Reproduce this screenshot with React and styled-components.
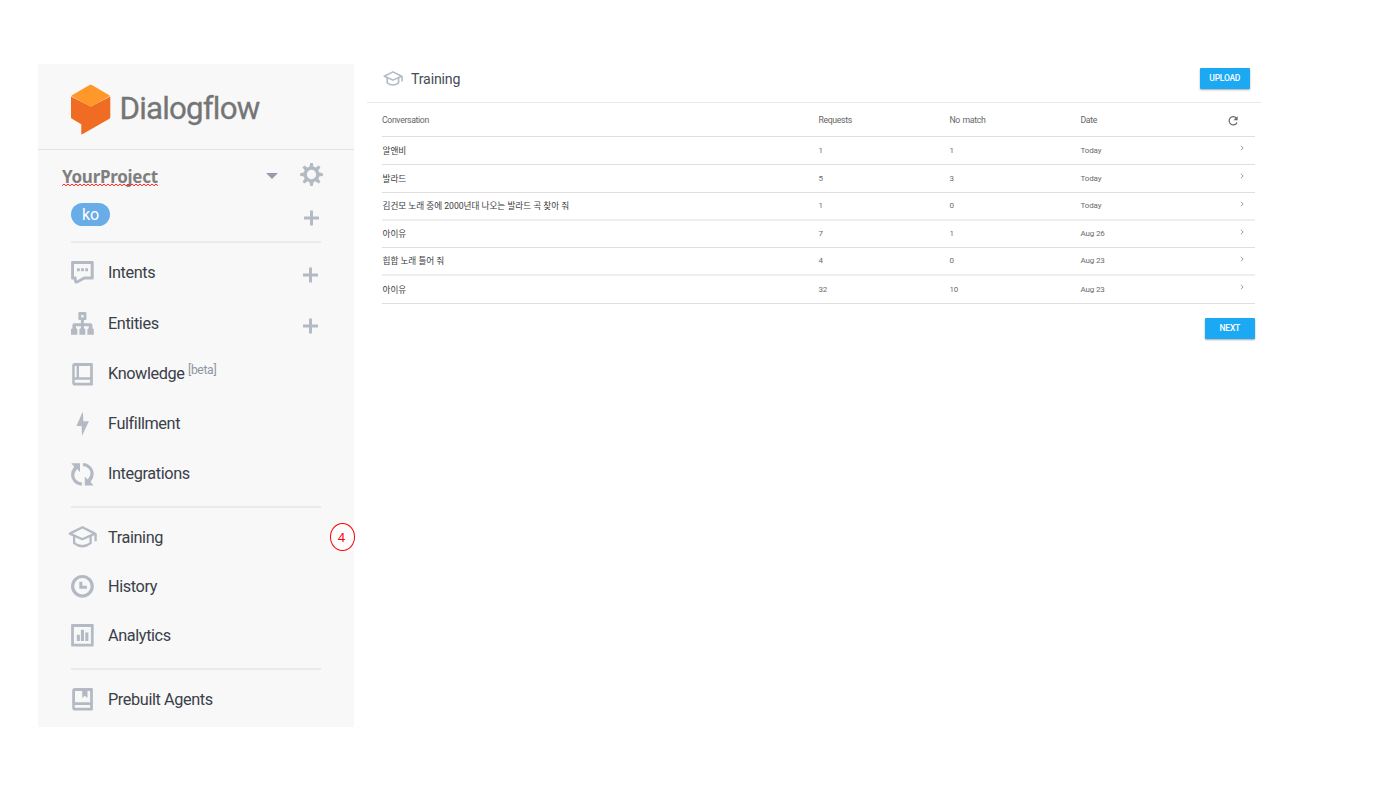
import React from "react";
import styled, { createGlobalStyle } from "styled-components";

const GlobalStyle = createGlobalStyle`
  * { box-sizing: border-box; }
  body { margin: 0; background: #fff; font-family: Roboto, "Noto Sans CJK KR", sans-serif; }
  svg { display: block; flex: none; }
`;

const ICON = "#b4bac4";

const Page = styled.div`
  display: flex;
  align-items: flex-start;
  gap: 13px;
  width: 1397px;
  height: 785px;
  padding: 64px 0 0 38px;
  overflow: hidden;
`;

/* ---------- sidebar ---------- */

const Sidebar = styled.aside`
  width: 316px;
  height: 663px;
  background: #f8f8f8;
`;

const Brand = styled.div`
  display: flex;
  align-items: flex-start;
  height: 86px;
  padding: 20px 0 0 32px;
  border-bottom: 1px solid #e2e2e2;
`;

const BrandName = styled.span`
  margin: 6px 0 0 7.5px;
  font-size: 31.3px;
  line-height: 38px;
  letter-spacing: -0.82px;
  color: #757575;
  -webkit-text-stroke: 0.3px #757575;
`;

const ProjectRow = styled.div`
  display: flex;
  align-items: center;
  height: 49px;
  padding: 0 31px 0 24px;
`;

const ProjectName = styled.span`
  position: relative;
  flex: 1;
  font: 700 17px/24px "Noto Sans", sans-serif;
  letter-spacing: -0.28px;
  color: #7f7f7f;
  padding-top: 4px;
`;

const Squiggle = styled.svg`
  position: absolute;
  left: 0;
  top: 22px;
`;

const Caret = styled.span`
  width: 0;
  height: 0;
  margin: 3px 22px 0 0;
  border: 6px solid transparent;
  border-top-color: #959cab;
  border-bottom: 0;
`;

const LanguageRow = styled.div`
  display: flex;
  justify-content: space-between;
  align-items: flex-start;
  height: 42px;
  padding: 4px 34.5px 0 33px;
`;

const LanguagePill = styled.span`
  width: 39px;
  height: 23px;
  border-radius: 12px;
  background: #68ade7;
  color: #fff;
  font-size: 16px;
  line-height: 23px;
  letter-spacing: -0.2px;
  text-align: center;
`;

const PlusSlot = styled.span`
  margin-top: ${(p) => p.$top || 0}px;
`;

const Divider = styled.hr`
  height: 2px;
  margin: 0 33px ${(p) => p.$below}px;
  border: 0;
  background: #ebebeb;
`;

const Group = styled.nav`
  padding-bottom: ${(p) => p.$below || 0}px;
`;

const NavItem = styled.a`
  display: flex;
  align-items: center;
  height: ${(p) => p.$height || 49}px;
  padding: 0 35.5px 0 30px;
  color: #3a4049;
  font-size: 16.3px;
  line-height: 20px;
`;

const IconSlot = styled.span`
  display: flex;
  justify-content: center;
  width: 28px;
  margin-right: 12px;
`;

const Label = styled.span`
  flex: 1;
  padding-top: ${(p) => p.$drop}px;
  letter-spacing: -0.4px;
`;

const Beta = styled.sup`
  position: relative;
  top: -5px;
  margin-left: 3.5px;
  vertical-align: baseline;
  font-size: 12.2px;
  letter-spacing: -0.35px;
  line-height: 1;
  color: #8f96a3;
`;

const StepMark = styled.span`
  display: flex;
  align-items: center;
  justify-content: center;
  width: 25px;
  height: 28px;
  margin-right: -36.5px;
  padding-right: 2px;
  border: 1px solid #f00;
  border-radius: 50%;
  background: #fff;
  color: #f00;
  font: 13px/1 "Noto Sans", sans-serif;
`;

/* ---------- training panel ---------- */

const Panel = styled.main`
  width: 894px;
`;

const PanelHeader = styled.header`
  display: flex;
  align-items: flex-start;
  height: 39px;
  padding: 4px 11px 0 16px;
  border-bottom: 1px solid #e8e8e8;
`;

const TitleIcon = styled.span`
  padding-top: 3px;
`;

const PanelTitle = styled.h1`
  flex: 1;
  margin: 1px 0 0 8px;
  font-size: 14.2px;
  letter-spacing: -0.18px;
  line-height: 20px;
  font-weight: 400;
  color: #464c57;
`;

const Button = styled.button`
  width: 50.5px;
  height: 20.5px;
  padding: 0;
  border: 0;
  border-radius: 1px;
  background: #1ba9f4;
  box-shadow: 0 1px 2px rgba(0, 0, 0, 0.35);
  color: #fff;
  font: 500 8.5px/20px Roboto, sans-serif;
  letter-spacing: -0.25px;
`;

const Table = styled.section`
  padding: 0 6px 0 15px;
`;

const Row = styled.div`
  display: grid;
  grid-template-columns: 436.5px 131px 131px 1fr auto;
  align-items: center;
  height: ${(p) => p.$height}px;
  border-bottom: ${(p) => (p.$soft ? "2px solid #eeeeee" : "1px solid #dfdfdf")};
  font-size: 8px;
  letter-spacing: -0.15px;
  line-height: 12px;
  color: #6b6b6b;
`;

const HeadRow = styled(Row)`
  font-size: 8.7px;
  letter-spacing: -0.35px;
  word-spacing: 0.8px;
  color: #666;
`;

const Phrase = styled.span`
  font-size: 8.65px;
  letter-spacing: -0.02px;
  padding-left: 0.5px;
  color: #3c3c3c;
`;

const RefreshSlot = styled.span`
  padding: 3px 16px 0 0;
`;

const ArrowSlot = styled.span`
  padding: 0 10px 5px 0;
`;

const Footer = styled.footer`
  display: flex;
  justify-content: flex-end;
  padding-top: 14px;
`;

/* ---------- icons ---------- */

const Logo = () => (
  <svg width="42" height="52" viewBox="0 0 42 52">
    <path d="M1 12.5 20.8 22.6 40.3 12.5V33.2Q40.3 34.2 39.4 34.8L12.3 50.3Q11.3 50.7 11.3 49.7V40.2L2 34.8Q1 34.2 1 33.2Z" fill="#ef6c22" />
    <path d="M19.5 1.1Q20.7.4 21.9 1.1L39.3 11.2Q40.4 11.9 39.3 12.5L20.7 22.7 2 12.5Q1 11.9 2 11.2Z" fill="#ff9829" />
  </svg>
);

const Plus = () => (
  <svg width="16" height="16" viewBox="0 0 16 16" fill="none" stroke={ICON} strokeWidth="3">
    <path d="M7.5 .5v15M0 8h15" />
  </svg>
);

const Gear = () => (
  <svg width="23" height="23" viewBox="-11.5 -11.5 23 23" fill="none" stroke={ICON}>
    <circle r="6.3" strokeWidth="3.3" />
    {[0, 45, 90, 135, 180, 225, 270, 315].map((a) => (
      <path key={a} transform={`rotate(${a})`} fill={ICON} stroke="none" d="M-2.2-7 -1.2-11.4H1.2L2.2-7Z" />
    ))}
  </svg>
);

const NavSvg = ({ children }) => (
  <svg width="24" height="24" viewBox="-0.4 -0.3 24 24" fill={ICON}>{children}</svg>
);

const Intents = () => (
  <NavSvg>
    <path fillRule="evenodd" d="M1.5.8h20.8q1 0 1 1v16.4q0 1-1 1h-8.2L6.8 23.2q-2.5.5-3-1.8l-.4-2.2H1.7q-1 0-1-1V1.8q0-1 .8-1ZM3.6 3.7v12.5h2.2l.8 3.9 6.9-3.9h6.8V3.7Z" />
    <path d="M6.6 8h2.8v2.9H6.6zM10.7 8h2.8v2.9h-2.8zM14.8 8h2.8v2.9h-2.8z" />
  </NavSvg>
);

const Entities = () => (
  <NavSvg>
    <path fillRule="evenodd" d="M9 .8h6q1 0 1 1v6q0 1-1 1h-1.5v3.1h6.8q1.7 0 1.7 1.7V17q1.4.2 1.4 1.5v4.9H17v-4.9q0-1.3 1.4-1.5v-2.1h-4.9V17q1.4.2 1.4 1.5v4.9H9v-4.9q0-1.3 1.5-1.5v-2.1H5.6V17Q7 17.2 7 18.5v4.9H.6v-4.9Q.6 17.2 2 17v-3.4q0-1.7 1.7-1.7h6.8V8.8H9q-1 0-1-1v-6q0-1 1-1Zm1.9 3v2.3h2.2V3.8Z" />
  </NavSvg>
);

const Knowledge = () => (
  <NavSvg>
    <path fillRule="evenodd" d="M4.5.8h17q1 0 1 1v20.4q0 1-1 1h-17q-2.7 0-2.7-2.8V3.5Q1.8.8 4.5.8ZM8.6 3.6V15h11.1V3.6ZM4.3 3.8V15h1.9V3.6H4.9ZM5 17.5q-.7 0-.7 1v1q0 1 .7 1h14.7v-3Z" />
  </NavSvg>
);

const Prebuilt = () => (
  <NavSvg>
    <path fillRule="evenodd" d="M4.5.8h17q1 0 1 1v20.4q0 1-1 1h-17q-2.7 0-2.7-2.8V3.5Q1.8.8 4.5.8ZM4.6 3.6V15h15.1V3.6h-2.6v7.1l-2.7-2.2-2.6 2.2V3.6ZM5 17.7q-.7 0-.7.9v.9q0 .9.7.9h14.7v-2.7Z" />
  </NavSvg>
);

const Fulfillment = () => (
  <NavSvg><path d="M11.8.5 6 13.8h5.2L11.6 23.6 18.5 9h-5.6L12.6.5Z" /></NavSvg>
);

const Integrations = () => (
  <NavSvg>
    <path d="M.9.9h8.7v9L6.7 6.8Q1.5 12.8 5.9 17.7 8.2 20 11.5 20.2V23.4Q4.4 23 1.5 16.5-.9 10 3.8 4.4ZM23.1 23.1h-8.7v-9l2.9 3.1q5.2-6 .8-10.9Q15.8 4 12.5 3.8V.6q7.1.4 10 6.9 2.4 6.5-2.3 12.1Z" />
  </NavSvg>
);

const History = () => (
  <NavSvg>
    <circle cx="12" cy="12" r="9.8" fill="none" stroke={ICON} strokeWidth="3.2" />
    <path d="M8.9 7.5h3v4h4.6v3H8.9Z" />
  </NavSvg>
);

const Analytics = () => (
  <NavSvg>
    <path fillRule="evenodd" d="M1.5.8h21q.8 0 .8.8v20.8q0 .8-.8.8h-21q-.8 0-.8-.8V1.6q0-.8.8-.8ZM3.5 3.6v16.8h17V3.6Z" />
    <path d="M6.4 11.5h3.1v6.2H6.4zM10.5 6.4h3.1v11.3h-3.1zM14.9 9.2H18v8.5h-3.1z" />
  </NavSvg>
);

const Cap = ({ width = 29 }) => (
  <svg width={width} height={(width * 22) / 29} viewBox="0 0 29 22" fill="none" stroke={ICON} strokeWidth="2.3" strokeLinejoin="round">
    <path d="M1.8 7.6 14.4 1.3 27 7.6 14.4 13.2Z" />
    <path d="M6.1 10v7.1q8.2 6.3 16.5 0V10M27.6 7.4v7.9" />
  </svg>
);

const Refresh = () => (
  <svg width="12" height="12" viewBox="0 0 12 12" fill="none" stroke="#666" strokeWidth="1.2">
    <path d="M9.3 3A4.1 4.1 0 1 0 10 7.4" />
    <path d="M10.6 1.3v4H6.5Z" fill="#666" stroke="none" />
  </svg>
);

const Arrow = () => (
  <svg width="6" height="6" viewBox="0 0 6 6" fill="none" stroke="#999" strokeWidth="1">
    <path d="M2 .8 4.1 3 2 5.2" />
  </svg>
);

/* ---------- data ---------- */

const primary = [
  { label: "Intents", Icon: Intents, height: 50.5, drop: 2, add: true },
  { label: "Entities", Icon: Entities, height: 51, drop: 2, add: true },
  { label: "Knowledge", Icon: Knowledge, height: 50.5, beta: true },
  { label: "Fulfillment", Icon: Fulfillment, height: 49.5 },
  { label: "Integrations", Icon: Integrations, height: 50 },
];

const secondary = [
  { label: "Training", Icon: Cap, drop: 2, step: 4 },
  { label: "History", Icon: History, drop: 2 },
  { label: "Analytics", Icon: Analytics, drop: 2 },
];

const conversations = [
  { phrase: "알앤비", requests: 1, noMatch: 1, date: "Today", height: 28 },
  { phrase: "발라드", requests: 5, noMatch: 3, date: "Today", height: 28 },
  { phrase: "김건모 노래 중에 2000년대 나오는 발라드 곡 찾아 줘", requests: 1, noMatch: 0, date: "Today", height: 28, soft: true },
  { phrase: "아이유", requests: 7, noMatch: 1, date: "Aug 26", height: 27 },
  { phrase: "힙합 노래 틀어 줘", requests: 4, noMatch: 0, date: "Aug 23", height: 28, soft: true },
  { phrase: "아이유", requests: 32, noMatch: 10, date: "Aug 23", height: 28 },
];

const Item = ({ label, Icon, height, drop = 0, add, beta, step }) => (
  <NavItem $height={height}>
    <IconSlot><Icon /></IconSlot>
    <Label $drop={drop}>
      {label}
      {beta && <Beta>[beta]</Beta>}
    </Label>
    {add && <PlusSlot $top={6}><Plus /></PlusSlot>}
    {step && <StepMark>{step}</StepMark>}
  </NavItem>
);

export default function App() {
  return (
    <>
      <GlobalStyle />
      <Page>
        <Sidebar>
          <Brand>
            <Logo />
            <BrandName>Dialogflow</BrandName>
          </Brand>
          <ProjectRow>
            <ProjectName>
              YourProject
              <Squiggle width="97" height="4" viewBox="0 0 97 4" fill="none" stroke="#f22" strokeWidth="1">
                <path d={"M0 2.8" + Array.from({ length: 24 }, () => "l2-1.8l2 1.8").join("")} />
              </Squiggle>
            </ProjectName>
            <Caret />
            <Gear />
          </ProjectRow>
          <LanguageRow>
            <LanguagePill>ko</LanguagePill>
            <PlusSlot $top={6.5}><Plus /></PlusSlot>
          </LanguageRow>
          <Divider $below={4} />
          <Group $below={7.5}>
            {primary.map((item) => <Item key={item.label} {...item} />)}
          </Group>
          <Divider $below={4.5} />
          <Group $below={8.5}>
            {secondary.map((item) => <Item key={item.label} {...item} />)}
          </Group>
          <Divider $below={4.5} />
          <Group>
            <Item label="Prebuilt Agents" Icon={Prebuilt} drop={2} />
          </Group>
        </Sidebar>
        <Panel>
          <PanelHeader>
            <TitleIcon><Cap width={20} /></TitleIcon>
            <PanelTitle>Training</PanelTitle>
            <Button>UPLOAD</Button>
          </PanelHeader>
          <Table>
            <HeadRow $height={34}>
              <span>Conversation</span>
              <span>Requests</span>
              <span>No match</span>
              <span>Date</span>
              <RefreshSlot><Refresh /></RefreshSlot>
            </HeadRow>
            {conversations.map((c, i) => (
              <Row key={i} $height={c.height} $soft={c.soft}>
                <Phrase>{c.phrase}</Phrase>
                <span>{c.requests}</span>
                <span>{c.noMatch}</span>
                <span>{c.date}</span>
                <ArrowSlot><Arrow /></ArrowSlot>
              </Row>
            ))}
            <Footer>
              <Button>NEXT</Button>
            </Footer>
          </Table>
        </Panel>
      </Page>
    </>
  );
}
